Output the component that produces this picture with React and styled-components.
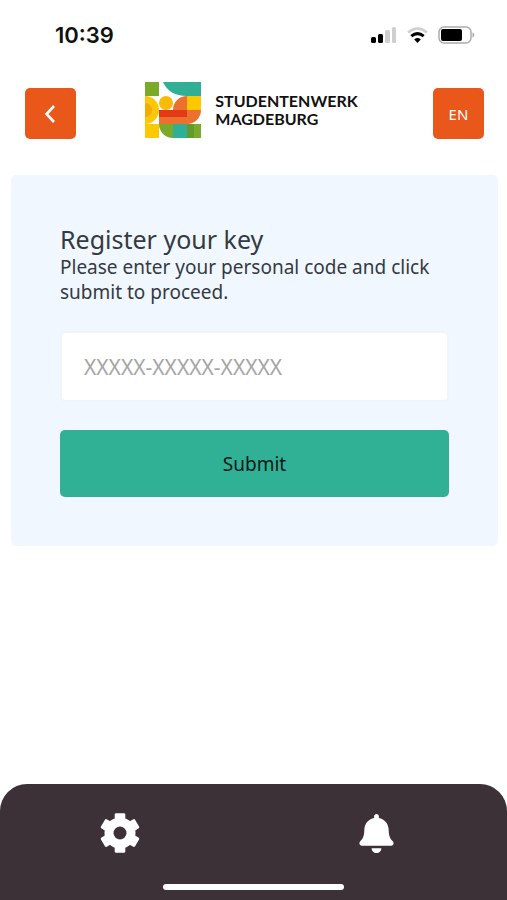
import React from "react";
import styled, { createGlobalStyle } from "styled-components";
import { FaBell } from "react-icons/fa";

const GlobalStyle = createGlobalStyle`
    * {
        box-sizing: border-box;
    }

    body {
        margin: 0;
        background: #ffffff;
        color: #343a3f;
        font-family: "Noto Sans", "Open Sans", sans-serif;
    }
`

const Page = styled.div`
    min-height: 100vh;
    display: flex;
    flex-direction: column;
`

const StatusBar = styled.div`
    height: 70px;
    padding: 0 32px 0 55px;
    display: flex;
    justify-content: space-between;
    align-items: center;
`

const Clock = styled.span`
    color: #111111;
    font-family: Inter, sans-serif;
    font-size: 22px;
    font-weight: 600;
    line-height: 24px;
`

const StatusIcons = styled.div`
    display: flex;
    align-items: center;
    gap: 10px;

    svg {
        display: block;
    }
`

const Header = styled.header`
    padding: 12px 23px 36px 25px;
    display: flex;
    justify-content: space-between;
    align-items: flex-end;
`

const SquareButton = styled.button`
    width: 51px;
    height: 51px;
    padding: 0;
    display: flex;
    justify-content: center;
    align-items: center;
    border: 0;
    border-radius: 5px;
    background: #e9571b;
    color: #ffffff;
    font-family: inherit;
    font-size: 15px;
`

const Brand = styled.div`
    padding: 0 6px 1px 0;
    display: flex;
    align-items: center;
    gap: 14px;
`

const BrandName = styled.span`
    color: #111111;
    font-family: Lato, sans-serif;
    font-size: 16px;
    font-weight: 700;
    line-height: 18px;
`

const Card = styled.main`
    margin: 0 9px 0 11px;
    padding: 49px;
    border-radius: 5px;
    background: #f0f7ff;
`

const Title = styled.h1`
    margin: 0;
    font-size: 25px;
    font-weight: 400;
    line-height: 31px;
`

const Text = styled.p`
    margin: 0 0 26px;
    font-size: 19px;
    line-height: 25px;
`

const KeyForm = styled.form`
    display: flex;
    flex-direction: column;
    gap: 28px;
`

const KeyInput = styled.input`
    width: 100%;
    height: 71px;
    padding: 0 22px;
    border: 2px solid #f0f4fb;
    border-radius: 5px;
    background: #ffffff;
    color: #343a3f;
    font-family: inherit;
    font-size: 21px;

    &::placeholder {
        color: #a5a5a5;
        opacity: 1;
    }
`

const SubmitButton = styled.button`
    height: 67px;
    border: 0;
    border-radius: 5px;
    background: #30b196;
    color: #0b1815;
    font-family: inherit;
    font-size: 19px;
`

const TabBar = styled.footer`
    height: 116px;
    margin-top: auto;
    padding: 25px 0 10px;
    display: flex;
    flex-direction: column;
    justify-content: space-between;
    border-radius: 27px 27px 0 0;
    background: #3c3137;
`

const Tabs = styled.nav`
    padding: 0 21% 0 19%;
    display: flex;
    justify-content: space-between;
`

const TabButton = styled.button`
    width: 48px;
    height: 48px;
    padding: 0;
    display: flex;
    justify-content: center;
    align-items: center;
    border: 0;
    background: none;
    color: #ffffff;
`

const HomeIndicator = styled.div`
    align-self: center;
    width: 181px;
    height: 6px;
    border-radius: 3px;
    background: #ffffff;
`

const Signal = () => (
    <svg width="26" height="18" viewBox="0 0 26 18" aria-hidden="true">
        <rect x="0" y="11" width="5" height="6" rx="1.5" fill="#000" />
        <rect x="7" y="8" width="5" height="9" rx="1.5" fill="#000" />
        <rect x="14" y="4" width="5" height="13" rx="1.5" fill="#cfcfcf" />
        <rect x="21" y="1" width="4" height="16" rx="1.5" fill="#cfcfcf" />
    </svg>
)

const Wifi = () => (
    <svg width="21" height="18" viewBox="0 0 21 18" aria-hidden="true">
        <path d="M1 6.5Q10.5 -1.5 20 6.5" fill="none" stroke="#cfcfcf" strokeWidth="2.6" />
        <path d="M4.3 10.2Q10.5 5 16.7 10.2" fill="none" stroke="#000" strokeWidth="3" />
        <path d="M7.2 13.4Q10.5 10.8 13.8 13.4L10.5 17Z" fill="#000" />
    </svg>
)

const Battery = () => (
    <svg width="37" height="18" viewBox="0 0 37 18" aria-hidden="true">
        <rect x="1" y="1" width="32" height="16" rx="5" fill="#fff" stroke="#acacac" strokeWidth="1.5" />
        <rect x="3" y="3" width="21" height="12" rx="2" fill="#000" />
        <path d="M34.5 6.5C37 7 37 11 34.5 11.5Z" fill="#acacac" />
    </svg>
)

const Chevron = () => (
    <svg width="14" height="20" viewBox="0 0 14 20" aria-hidden="true">
        <path d="M10 2L2.5 10L10 18" fill="none" stroke="#fff" strokeWidth="2.6" />
    </svg>
)

const Gear = () => (
    <svg width="40" height="40" viewBox="-20 -20 40 40" fill="currentColor" aria-hidden="true">
        <circle r="15.5" />
        {[0, 60, 120].map(angle => (
            <rect key={angle} x="-5.3" y="-19.7" width="10.6" height="39.4" rx="1.3" transform={`rotate(${angle})`} />
        ))}
        <circle r="6.5" fill="#3c3137" />
    </svg>
)

const Logo = () => (
    <svg width="56" height="56" viewBox="0 0 56 56" aria-hidden="true">
        <path d="M0 0H14V14H0Z" fill="#79aa2a" />
        <path d="M18 0H56V14H42C30 14 22 9 18 0Z" fill="#2fb096" />
        <path d="M0 14A14 14 0 0 1 0 42Z" fill="#fbc707" />
        <path d="M0 21A7 7 0 0 1 0 35Z" fill="#f3ac05" />
        <circle cx="21" cy="21" r="7" fill="#f7bc08" />
        <path d="M42 14H56V28H42Z" fill="#fdc800" />
        <path d="M42 14A14 14 0 0 0 28 28H14V42H42A14 14 0 0 0 56 28H42Z" fill="#ec702e" />
        <path d="M14 28H42V35H14Z" fill="#e23a17" />
        <path d="M0 42H14V56H0Z" fill="#fdc800" />
        <path d="M14 42H28V56A14 14 0 0 1 14 42Z" fill="#79aa2a" />
        <path d="M28 42H42V56H28Z" fill="#2fb096" />
        <path d="M42 42H49V56H42Z" fill="#629b2b" />
        <path d="M49 42H56V56H49Z" fill="#79aa2a" />
    </svg>
)

const App = () => (
    <Page>
        <GlobalStyle />
        <StatusBar>
            <Clock>10:39</Clock>
            <StatusIcons>
                <Signal />
                <Wifi />
                <Battery />
            </StatusIcons>
        </StatusBar>
        <Header>
            <SquareButton type="button" aria-label="Back">
                <Chevron />
            </SquareButton>
            <Brand>
                <Logo />
                <BrandName>
                    STUDENTENWERK
                    <br />
                    MAGDEBURG
                </BrandName>
            </Brand>
            <SquareButton type="button">EN</SquareButton>
        </Header>
        <Card>
            <Title>Register your key</Title>
            <Text>Please enter your personal code and click submit to proceed.</Text>
            <KeyForm onSubmit={(e) => e.preventDefault()}>
                <KeyInput type="text" aria-label="Personal code" placeholder="XXXXX-XXXXX-XXXXX" />
                <SubmitButton type="submit">Submit</SubmitButton>
            </KeyForm>
        </Card>
        <TabBar>
            <Tabs>
                <TabButton type="button" aria-label="Settings">
                    <Gear />
                </TabButton>
                <TabButton type="button" aria-label="Notifications">
                    <FaBell size={39} />
                </TabButton>
            </Tabs>
            <HomeIndicator />
        </TabBar>
    </Page>
)

export default App
